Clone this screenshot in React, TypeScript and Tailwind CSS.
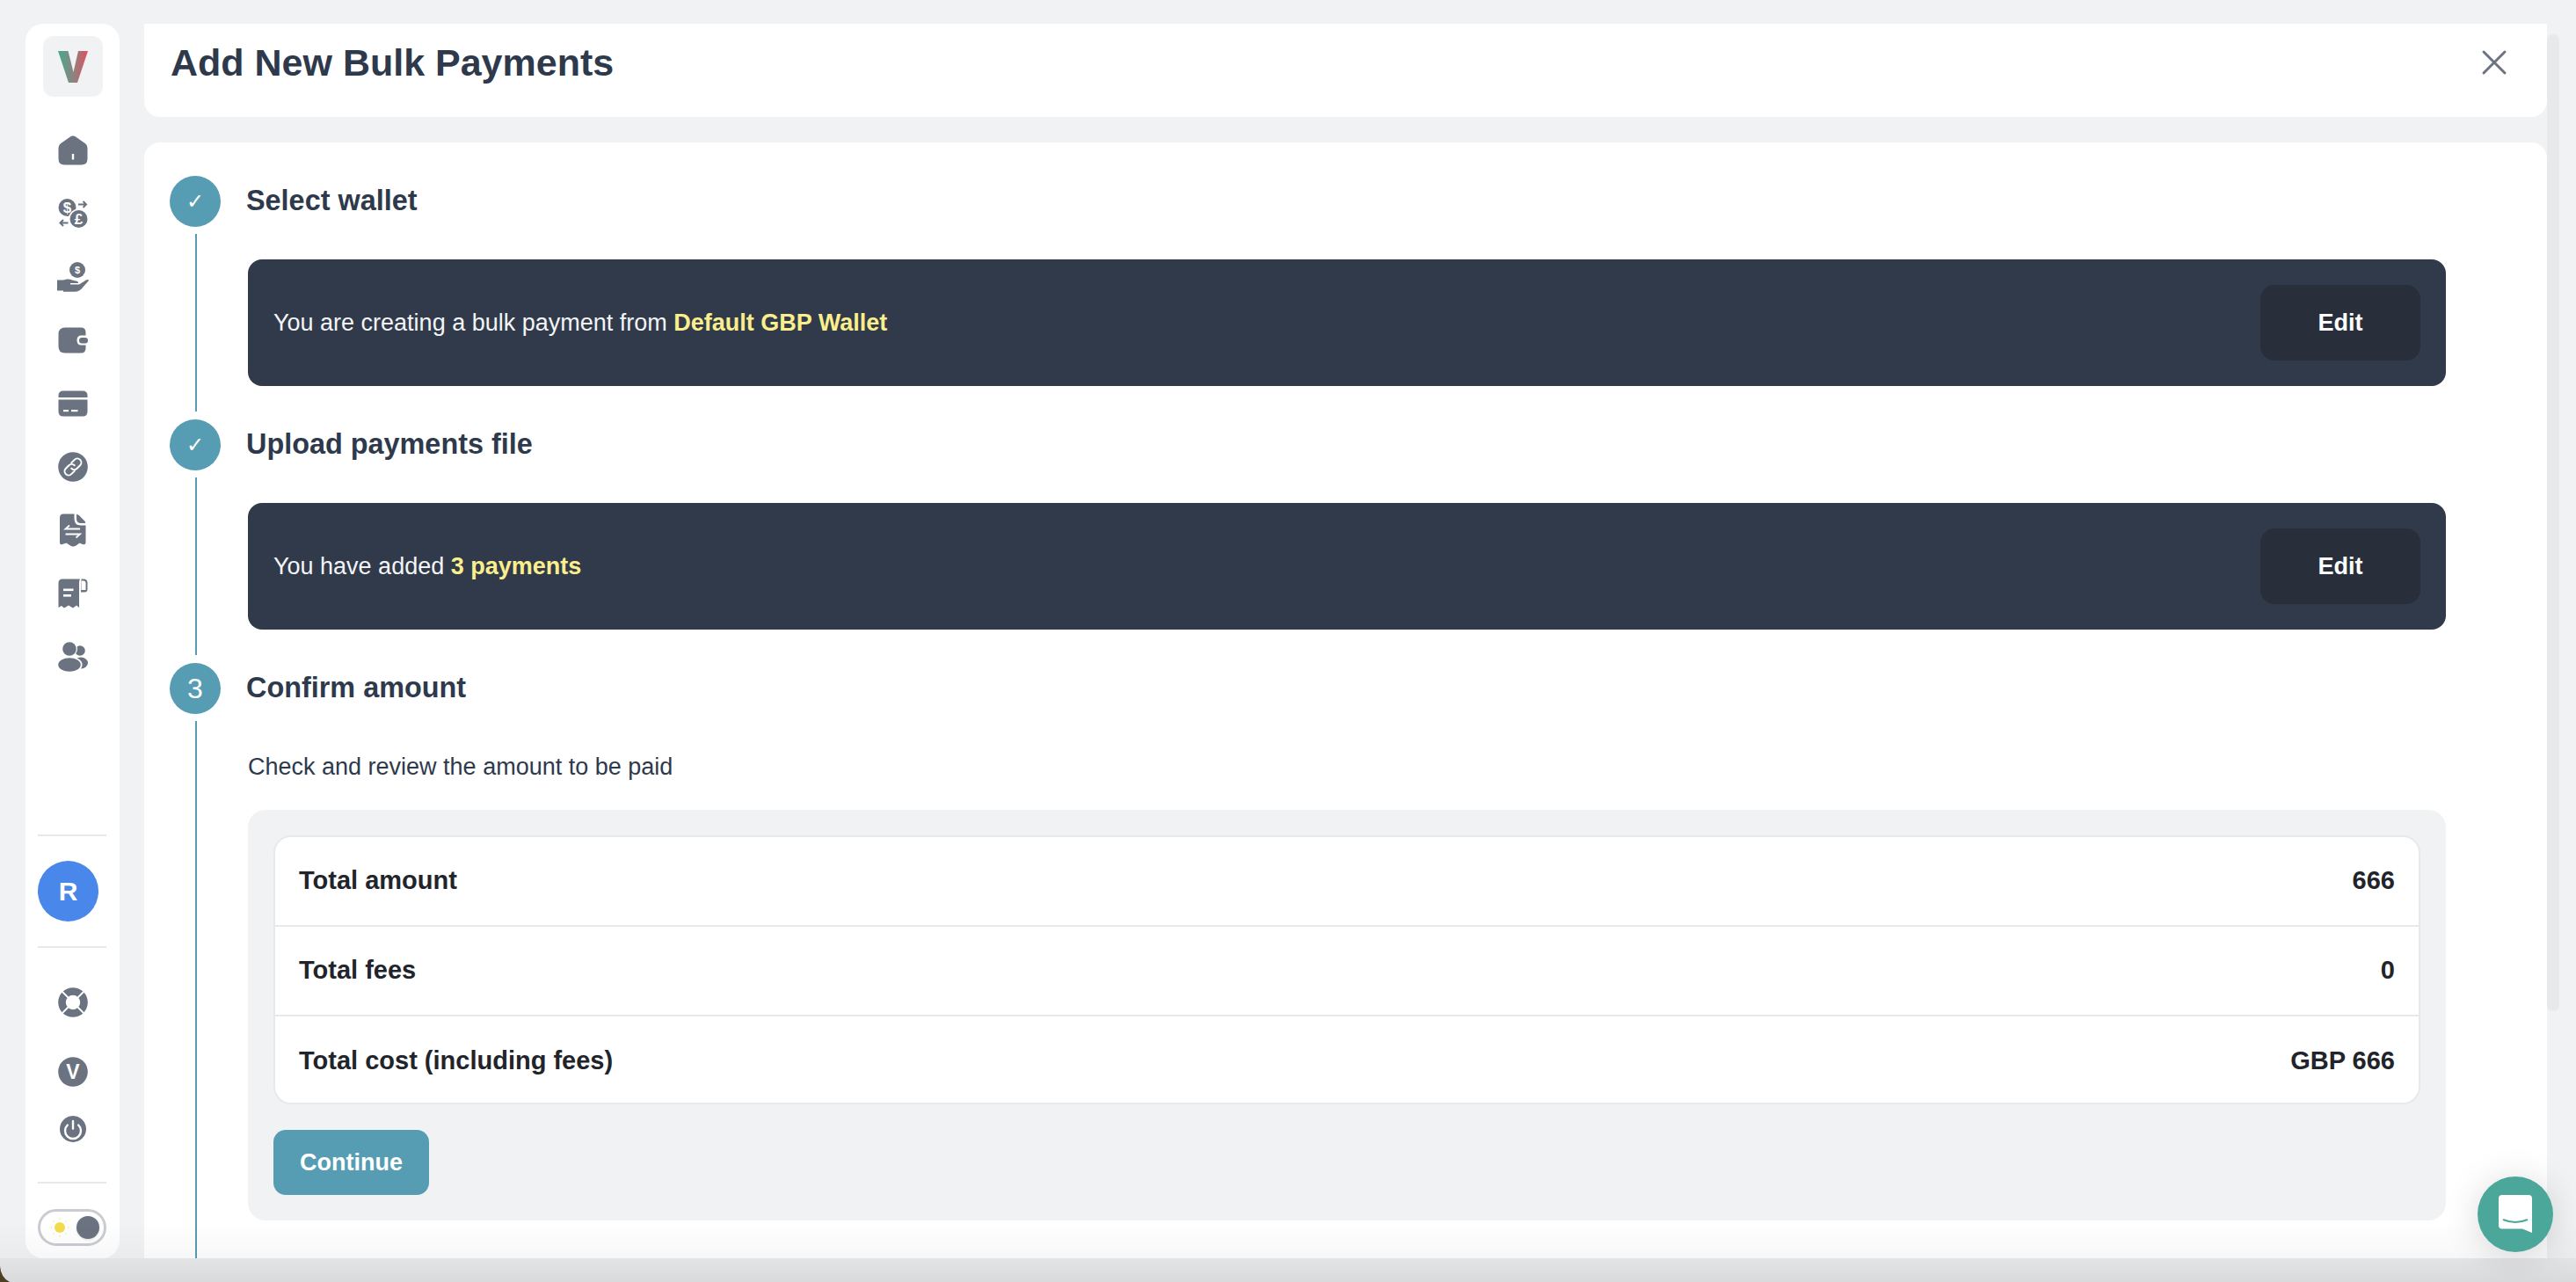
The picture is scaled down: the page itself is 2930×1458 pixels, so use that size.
import { X } from "lucide-react";

const SIDE = "#6b7280";

// sidebar icons, all drawn in a 34 box
const HomeIcon = () => (
  <svg viewBox="0 0 34 34" className="w-[34px] h-[34px]">
    <path fill={SIDE} d="M17 .5Q18.8.5 20.4 1.8L31 9.2Q33.5 11 33.5 14V26.5Q33.5 33.5 26.5 33.5H7.5Q.5 33.5.5 26.5V14Q.5 11 3 9.2L13.6 1.8Q15.2.5 17 .5Z" />
    <rect x="15.8" y="21" width="2.4" height="6.5" fill="white" />
  </svg>
);

const ExchangeIcon = () => (
  <svg viewBox="0 0 34 34" className="w-[34px] h-[34px]">
    <circle cx="10.5" cy="10" r="10" fill={SIDE} />
    <circle cx="23.5" cy="23" r="11.5" fill="white" />
    <circle cx="23.5" cy="23" r="10" fill={SIDE} />
    <text x="10.5" y="16" textAnchor="middle" fontSize="17" fontWeight="700" fill="white" fontFamily="Liberation Sans">$</text>
    <text x="23.5" y="29" textAnchor="middle" fontSize="17" fontWeight="700" fill="white" fontFamily="Liberation Sans">£</text>
    <path d="M23 6.5H32M28.5 3l3.5 3.5-3.5 3.5" stroke={SIDE} strokeWidth="2" fill="none" />
    <path d="M11.5 27.5H2.5M6 24l-3.5 3.5L6 31" stroke={SIDE} strokeWidth="2" fill="none" />
  </svg>
);

const HandCoinIcon = () => (
  <svg viewBox="0 0 36 34" className="w-[36px] h-[34px]">
    <circle cx="23" cy="9" r="9" fill={SIDE} />
    <text x="23" y="13" textAnchor="middle" fontSize="11" fontWeight="700" fill="white" fontFamily="Liberation Sans">$</text>
    <path fill={SIDE} d="M0 20.5H7L11 19.5Q14 19 17 20.5L21 21.5Q24.5 22 24 24H15V25.5H25L33 20.5Q35.5 19.5 36 21L29 29Q25.5 33.8 20 33.8H7V32.5H0Z" />
  </svg>
);

const WalletIcon = () => (
  <svg viewBox="0 0 34 30" className="w-[34px] h-[30px]">
    <path fill={SIDE} d="M8 .5H26Q31.5.5 31.5 6V9.5H26.5Q21.5 9.5 21.5 15T26.5 20.5H31.5V24Q31.5 29.5 26 29.5H8Q.5 29.5.5 22V8Q.5.5 8 .5Z" />
    <rect x="24" y="12" width="10" height="6.5" rx="3.2" fill={SIDE} />
  </svg>
);

const CardIcon = () => (
  <svg viewBox="0 0 34 30" className="w-[34px] h-[30px]">
    <path fill={SIDE} d="M.5 8V6Q.5.5 6 .5H28Q33.5.5 33.5 6V8Z" />
    <path fill={SIDE} d="M.5 10.5H33.5V24Q33.5 29.5 28 29.5H6Q.5 29.5.5 24Z" />
    <rect x="6" y="22" width="6" height="2.2" fill="white" />
    <rect x="15" y="22" width="7.5" height="2.2" fill="white" />
  </svg>
);

const LinkIcon = () => (
  <svg viewBox="0 0 34 34" className="w-[34px] h-[34px]">
    <circle cx="17" cy="17" r="16.8" fill={SIDE} />
    <g fill="none" stroke="white" strokeWidth="2" strokeLinecap="round" transform="rotate(-45 17 17)">
      <path d="M15 21.5H10a4.5 4.5 0 0 1 0-9H15a4.5 4.5 0 0 1 4.5 4.5" />
      <path d="M19 12.5H24a4.5 4.5 0 0 1 0 9H19a4.5 4.5 0 0 1-4.5-4.5" />
    </g>
  </svg>
);

const DocIcon = () => (
  <svg viewBox="0 0 32 38" className="w-[32px] h-[38px]">
    <path fill={SIDE} d="M5 .5H17.5V6Q17.5 13.5 25 13.5H30.5V33Q30.5 36 27 35L23.5 33.5 19.5 36.5Q16 38.5 13 36.5L8.5 33.5 4 35Q1 36 1 33V5Q1 .5 5 .5Z" />
    <path fill={SIDE} d="M20 .8Q21.5.8 23 2.3L29 8.3Q30.5 10 30 11H25Q20 11 20 6Z" />
    <path d="M24 17.5H7.5L12 13.5M7.5 23.5H24L19.5 27.5" fill="none" stroke="white" strokeWidth="1.8" />
  </svg>
);

const ReceiptIcon = () => (
  <svg viewBox="0 0 34 34" className="w-[34px] h-[34px]">
    <path fill={SIDE} d="M5 .5H25Q24 2 24 5V33L21 30.5 17 33.5 12 30.5 7 33.5 4 31 .5 33V5Q.5.5 5 .5Z" />
    <path fill={SIDE} d="M26.5.5H29Q33.5.5 33.5 5V12Q33.5 15.5 30 15.5H26Z" />
    <path fill="white" d="M26.5 2.5H29Q31.5 2.5 31.5 5V13H26.5Z" />
    <rect x="6" y="11.5" width="11.5" height="2.6" fill="white" />
    <rect x="6" y="18" width="9" height="2.6" fill="white" />
  </svg>
);

const UsersIcon = () => (
  <svg viewBox="0 0 34 34" className="w-[34px] h-[34px]">
    <circle cx="25" cy="10" r="5.8" fill={SIDE} />
    <ellipse cx="26" cy="24" rx="8" ry="6.5" fill={SIDE} />
    <circle cx="13" cy="8" r="9" fill="white" />
    <ellipse cx="13" cy="26" rx="14.5" ry="9.5" fill="white" />
    <circle cx="13" cy="8" r="7.8" fill={SIDE} />
    <ellipse cx="13" cy="26" rx="12.8" ry="7.8" fill={SIDE} />
  </svg>
);

const LifebuoyIcon = () => (
  <svg viewBox="0 0 34 34" className="w-[34px] h-[34px]">
    <circle cx="17" cy="17" r="16.8" fill={SIDE} />
    <path d="M4 4L30 30M30 4L4 30" stroke="white" strokeWidth="1.8" />
    <circle cx="17" cy="17" r="8.2" fill="white" />
  </svg>
);

const VersionIcon = () => (
  <svg viewBox="0 0 34 34" className="w-[34px] h-[34px]">
    <circle cx="17" cy="17" r="16.8" fill={SIDE} />
    <text x="17" y="25" textAnchor="middle" fontSize="23" fontWeight="700" fill="white" fontFamily="Liberation Sans">V</text>
  </svg>
);

const PowerIcon = () => (
  <svg viewBox="0 0 30 30" className="w-[30px] h-[30px]">
    <circle cx="15" cy="15" r="15" fill={SIDE} />
    <path d="M8.8 10.5A9 9 0 1 0 21.2 10.5" fill="none" stroke="white" strokeWidth="2.4" strokeLinecap="round" />
    <path d="M15 6V14.5" stroke="white" strokeWidth="2.4" strokeLinecap="round" />
  </svg>
);

const SunIcon = () => (
  <svg viewBox="0 0 22 22" className="w-[22px] h-[22px]">
    <circle cx="11" cy="11" r="6" fill="#f3dc4e" />
    <path d="M11 .5V2M11 20V21.5M.5 11H2M20 11H21.5M3.5 3.5L4.5 4.5M17.5 17.5L18.5 18.5M18.5 3.5L17.5 4.5M4.5 17.5L3.5 18.5" stroke="#f3dc4e" strokeWidth="1" />
  </svg>
);

const Logo = () => (
  <svg viewBox="0 0 34 36" className="w-[34px] h-[36px]">
    <defs>
      <linearGradient id="logoV" x1="0" y1="0" x2="1" y2="0">
        <stop offset="0" stopColor="#45a98f" />
        <stop offset="0.5" stopColor="#8b8580" />
        <stop offset="1" stopColor="#e0505f" />
      </linearGradient>
    </defs>
    <polygon points="0,0 11.5,0 17.5,24 23,0 34,0 22,36 12,36" fill="url(#logoV)" />
  </svg>
);

const SideItem = ({ children }: { children: React.ReactNode }) => (
  <div className="h-[72px] w-full flex items-center justify-center">{children}</div>
);

const Divider = () => <div className="h-[2px] w-[78px] bg-[#e7e8ea] self-start ml-[14px]" />;

const Sidebar = () => (
  <aside className="w-[107px] h-[1404px] shrink-0 bg-white rounded-[20px] flex flex-col items-center pt-[14px]">
    <div className="w-[68px] h-[69px] bg-[#f1f2f4] rounded-[12px] flex items-center justify-center">
      <Logo />
    </div>
    <div className="w-full mt-[25px]">
      <SideItem><HomeIcon /></SideItem>
      <SideItem><ExchangeIcon /></SideItem>
      <SideItem><HandCoinIcon /></SideItem>
      <SideItem><WalletIcon /></SideItem>
      <SideItem><CardIcon /></SideItem>
      <SideItem><LinkIcon /></SideItem>
      <SideItem><DocIcon /></SideItem>
      <SideItem><ReceiptIcon /></SideItem>
      <SideItem><UsersIcon /></SideItem>
    </div>
    <div className="mt-auto w-full flex flex-col items-center pb-[14px]">
      <Divider />
      <div className="w-[69px] h-[69px] rounded-full bg-[#4a87ea] text-white font-bold text-[30px] flex items-center justify-center self-start ml-[14px] mt-[28px] mb-[28px]">
        R
      </div>
      <Divider />
      <div className="mt-[45px]"><LifebuoyIcon /></div>
      <div className="mt-[45px]"><VersionIcon /></div>
      <div className="mt-[33px]"><PowerIcon /></div>
      <div className="mt-[45px] self-start"><Divider /></div>
      <div className="mt-[29px] w-[78px] h-[42px] rounded-full border-[3px] border-[#c9ccd0] flex items-center justify-between pl-[11px] pr-[5px] self-start ml-[14px]">
        <SunIcon />
        <div className="w-[26px] h-[26px] rounded-full bg-[#6b7280] shadow" />
      </div>
    </div>
  </aside>
);

type StepProps = { mark: React.ReactNode; title: string; lineClass: string; children: React.ReactNode };

const Step = ({ mark, title, lineClass, children }: StepProps) => (
  <div className="flex">
    <div className="w-[58px] shrink-0 flex flex-col items-center">
      <div className="w-[58px] h-[58px] rounded-full bg-[#569cb3] text-white flex items-center justify-center">
        {mark}
      </div>
      <div className={`w-[2px] ml-[2px] bg-[#569cb3] mt-[8px] ${lineClass}`} />
    </div>
    <div className="ml-[29px] flex-1 min-w-0">
      <h3 className="h-[58px] pb-[1px] flex items-center text-[32.4px] font-bold text-[#2e3a4c]">{title}</h3>
      {children}
    </div>
  </div>
);

const Check = () => <span className="text-[24px] leading-none" style={{ fontFamily: "'DejaVu Sans', sans-serif" }}>✓</span>;

const Banner = ({ label, strong }: { label: string; strong: string }) => (
  <div className="mt-[37px] ml-[2px] w-[2500px] h-[144px] rounded-[16px] bg-[#303a4a] flex items-center justify-between pl-[29px] pr-[29px]">
    <p className="text-[27px] text-[#f3f4f6]">
      {label} <span className="font-bold text-[#fbee8c]">{strong}</span>
    </p>
    <button className="w-[182px] h-[86px] rounded-[16px] bg-[#282f3a] text-white text-[27px] font-bold">Edit</button>
  </div>
);

const Row = ({ k, v, last }: { k: string; v: string; last?: boolean }) => (
  <div className={`h-[102px] flex items-center justify-between px-[27px] text-[29px] font-bold text-[#21252b] ${last ? "" : "border-b-2 border-[#e8e9eb]"}`}>
    <span>{k}</span>
    <span>{v}</span>
  </div>
);

export default function App() {
  return (
    <div
      className="relative h-[1458px] w-[2930px] overflow-hidden bg-[#f1f2f4] flex items-start pt-[27px] pl-[29px]"
      style={{ fontFamily: "'Liberation Sans', Arial, sans-serif" }}
    >
      <Sidebar />
      <main className="ml-[28px] w-[2733px] h-[1404px] shrink-0 flex flex-col gap-[29px]">
        <header className="h-[106px] shrink-0 bg-white rounded-b-[18px] flex items-start justify-between pl-[30px] pr-[36px] pt-[18px]">
          <h1 className="text-[43px] leading-[52px] font-bold text-[#2e3a4c]">Add New Bulk Payments</h1>
          <X className="mt-[2px] w-[48px] h-[48px] text-[#6b7280]" strokeWidth={1.5} />
        </header>
        <section className="flex-1 min-h-0 bg-white rounded-t-[18px] overflow-hidden pl-[29px] pt-[38px]">
          <Step mark={<Check />} title="Select wallet" lineClass="h-[202px]">
            <Banner label="You are creating a bulk payment from" strong="Default GBP Wallet" />
          </Step>
          <div className="mt-[9px]">
            <Step mark={<Check />} title="Upload payments file" lineClass="h-[202px]">
              <Banner label="You have added" strong="3 payments" />
            </Step>
          </div>
          <div className="mt-[9px]">
            <Step mark={<span className="text-[32px] font-normal">3</span>} title="Confirm amount" lineClass="h-[700px]">
              <p className="mt-[44px] ml-[2px] text-[27px] leading-[32px] text-[#2e3a4c]">Check and review the amount to be paid</p>
              <div className="mt-[33px] ml-[2px] w-[2500px] h-[467px] rounded-[20px] bg-[#f1f2f4] px-[29px] pt-[29px]">
                <div className="bg-white rounded-[20px] border-2 border-[#e8e9eb] h-[306px]">
                  <Row k="Total amount" v="666" />
                  <Row k="Total fees" v="0" />
                  <Row k="Total cost (including fees)" v="GBP 666" last />
                </div>
                <button className="mt-[29px] w-[177px] h-[74px] rounded-[14px] bg-[#569db3] text-white text-[27px] font-bold">Continue</button>
              </div>
            </Step>
          </div>
        </section>
      </main>
      {/* scrollbar */}
      <div className="w-[14px] h-[1111px] mt-[12px] shrink-0 rounded-full bg-[#e8e9eb]" />

      {/* window shadow: faint over the page, stronger on the strip below it */}
      <div className="absolute inset-x-0 top-[1388px] h-[43px] pointer-events-none bg-gradient-to-b from-transparent to-black/[0.03]" />
      <div className="absolute inset-x-0 top-[1431px] bottom-0 pointer-events-none bg-gradient-to-b from-black/[0.06] to-black/10" />

      {/* rounded corner of the window, desktop shows through */}
      <svg viewBox="0 0 14 18" className="absolute left-0 bottom-0 w-[14px] h-[18px]">
        <path d="M0 0Q1 13 11 18H0Z" fill="#4f3f22" />
      </svg>

      {/* chat launcher */}
      <div className="absolute left-[2818px] top-[1338px] w-[86px] h-[86px] rounded-full bg-[#4ca79b] shadow-[0_4px_40px_rgba(0,0,0,0.15)] flex items-center justify-center">
        <svg viewBox="0 0 38 44" className="w-[38px] h-[44px]">
          <path fill="white" d="M4 0H34Q38 0 38 4V43L27 38.5H4Q0 38.5 0 34.5V4Q0 0 4 0Z" />
          <path d="M5 28Q19 34 33 28" fill="none" stroke="#4ca79b" strokeWidth="2" />
        </svg>
      </div>
    </div>
  );
}
